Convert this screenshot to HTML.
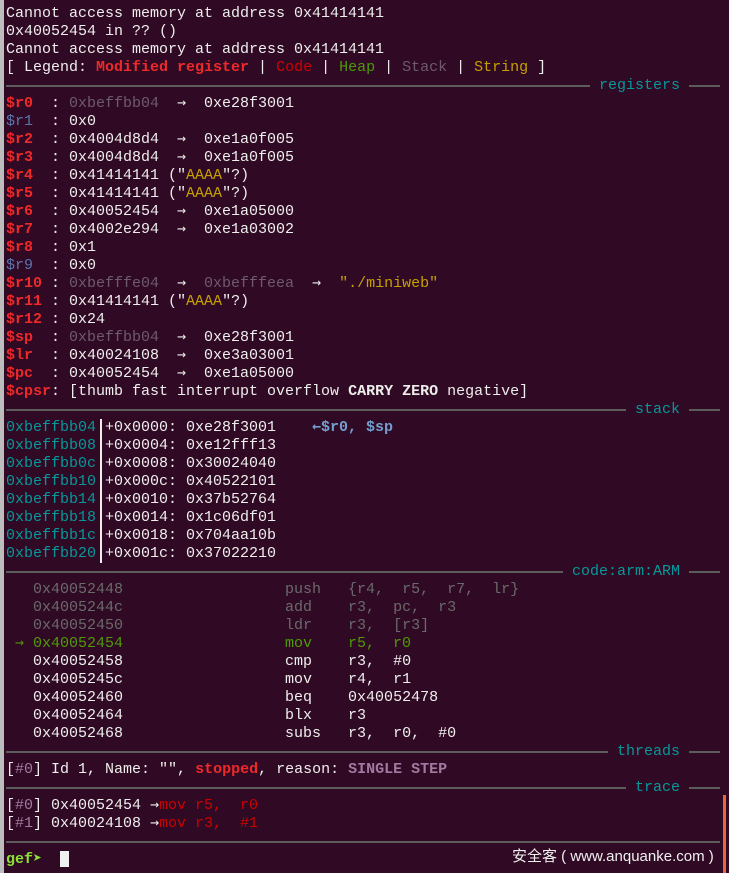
<!DOCTYPE html>
<html><head><meta charset="utf-8"><style>
html,body{margin:0;padding:0;background:#300a24;width:729px;height:873px;overflow:hidden}
#t{position:absolute;left:6px;top:5px;font-family:"Liberation Mono","DejaVu Sans Mono",monospace;font-size:15px;line-height:18px;color:#eeeeec;white-space:pre}
.r{height:18px;overflow:hidden}
.a{font-family:"DejaVu Sans Mono",monospace;font-size:14.9px;line-height:0}
.sep{height:18px;position:relative;width:714px}
.sep:before{content:"";position:absolute;left:0;right:0;top:8px;height:2px;background:#5c5c5c}
.sep span{position:absolute;right:31px;top:0;background:#300a24;padding:0 9px;color:#06989a}
.R{color:#ef2929;font-weight:bold}
.cr{color:#cc0000}
.g{color:#4e9a06}
.gy{color:#6e5a6e}
.y{color:#c4a000}
.bl{color:#5a76b0}
.t{color:#06989a}
.dim{color:#6a6a6a}
.b{font-weight:bold}
.ab{color:#729fcf;font-weight:bold}
.pu{color:#a07aa0}
#lstrip{position:absolute;left:0;top:0;width:4px;height:873px;background:#bdbdbd}
#vl{position:absolute;left:100px;top:419px;width:2px;height:144px;background:#eeeeec}
#or{position:absolute;left:723px;top:795px;width:3px;height:78px;background:#e8683a}
#wm{position:absolute;left:512px;top:845px;font-family:"Liberation Sans","Noto Sans CJK SC",sans-serif;font-size:15px;color:#f0f0f0}
#cur{position:absolute;left:60px;top:851px;width:9px;height:16px;background:#f0f0f0}
</style></head><body>
<div id="lstrip"></div>
<div id="t"><div class="r">Cannot access memory at address 0x41414141</div><div class="r">0x40052454 in ?? ()</div><div class="r">Cannot access memory at address 0x41414141</div><div class="r">[ Legend: <span class="R">Modified register</span> | <span class="cr">Code</span> | <span class="g">Heap</span> | <span class="gy">Stack</span> | <span class="y">String</span> ]</div><div class="sep"><span>registers</span></div><div class="r"><span class="R">$r0</span>  : <span class="gy">0xbeffbb04</span>  <span class="a">→</span>  0xe28f3001</div><div class="r"><span class="bl">$r1</span>  : 0x0</div><div class="r"><span class="R">$r2</span>  : 0x4004d8d4  <span class="a">→</span>  0xe1a0f005</div><div class="r"><span class="R">$r3</span>  : 0x4004d8d4  <span class="a">→</span>  0xe1a0f005</div><div class="r"><span class="R">$r4</span>  : 0x41414141 ("<span class="y">AAAA</span>"?)</div><div class="r"><span class="R">$r5</span>  : 0x41414141 ("<span class="y">AAAA</span>"?)</div><div class="r"><span class="R">$r6</span>  : 0x40052454  <span class="a">→</span>  0xe1a05000</div><div class="r"><span class="R">$r7</span>  : 0x4002e294  <span class="a">→</span>  0xe1a03002</div><div class="r"><span class="R">$r8</span>  : 0x1</div><div class="r"><span class="bl">$r9</span>  : 0x0</div><div class="r"><span class="R">$r10</span> : <span class="gy">0xbefffe04</span>  <span class="a">→</span>  <span class="gy">0xbefffeea</span>  <span class="a">→</span>  <span class="y">"./miniweb"</span></div><div class="r"><span class="R">$r11</span> : 0x41414141 ("<span class="y">AAAA</span>"?)</div><div class="r"><span class="R">$r12</span> : 0x24</div><div class="r"><span class="R">$sp</span>  : <span class="gy">0xbeffbb04</span>  <span class="a">→</span>  0xe28f3001</div><div class="r"><span class="R">$lr</span>  : 0x40024108  <span class="a">→</span>  0xe3a03001</div><div class="r"><span class="R">$pc</span>  : 0x40052454  <span class="a">→</span>  0xe1a05000</div><div class="r"><span class="R">$cpsr</span>: [thumb fast interrupt overflow <span class="b">CARRY ZERO</span> negative]</div><div class="sep"><span>stack</span></div><div class="r"><span class="t">0xbeffbb04</span> +0x0000: 0xe28f3001    <span class="ab"><span class="a">←</span>$r0, $sp</span></div><div class="r"><span class="t">0xbeffbb08</span> +0x0004: 0xe12fff13</div><div class="r"><span class="t">0xbeffbb0c</span> +0x0008: 0x30024040</div><div class="r"><span class="t">0xbeffbb10</span> +0x000c: 0x40522101</div><div class="r"><span class="t">0xbeffbb14</span> +0x0010: 0x37b52764</div><div class="r"><span class="t">0xbeffbb18</span> +0x0014: 0x1c06df01</div><div class="r"><span class="t">0xbeffbb1c</span> +0x0018: 0x704aa10b</div><div class="r"><span class="t">0xbeffbb20</span> +0x001c: 0x37022210</div><div class="sep"><span>code:arm:ARM</span></div><div class="r dim">   0x40052448                  push   {r4,  r5,  r7,  lr}</div><div class="r dim">   0x4005244c                  add    r3,  pc,  r3</div><div class="r dim">   0x40052450                  ldr    r3,  [r3]</div><div class="r g"> <span class="a">→</span> 0x40052454                  mov    r5,  r0</div><div class="r">   0x40052458                  cmp    r3,  #0</div><div class="r">   0x4005245c                  mov    r4,  r1</div><div class="r">   0x40052460                  beq    0x40052478</div><div class="r">   0x40052464                  blx    r3</div><div class="r">   0x40052468                  subs   r3,  r0,  #0</div><div class="sep"><span>threads</span></div><div class="r">[<span class="pu">#0</span>] Id 1, Name: "", <span class="R">stopped</span>, reason: <span class="pu b">SINGLE STEP</span></div><div class="sep"><span>trace</span></div><div class="r">[<span class="pu">#0</span>] 0x40052454 <span class="a">→</span><span class="cr">mov r5,  r0</span></div><div class="r">[<span class="pu">#1</span>] 0x40024108 <span class="a">→</span><span class="cr">mov r3,  #1</span></div><div class="sep"><span style="display:none"></span></div><div class="r"><span style="color:#8ae234;font-weight:bold">gef<span class="a">➤</span></span>  </div></div>
<div id="vl"></div>
<div id="cur"></div>
<div id="or"></div>
<div id="wm">安全客 ( www.anquanke.com )</div>
</body></html>
